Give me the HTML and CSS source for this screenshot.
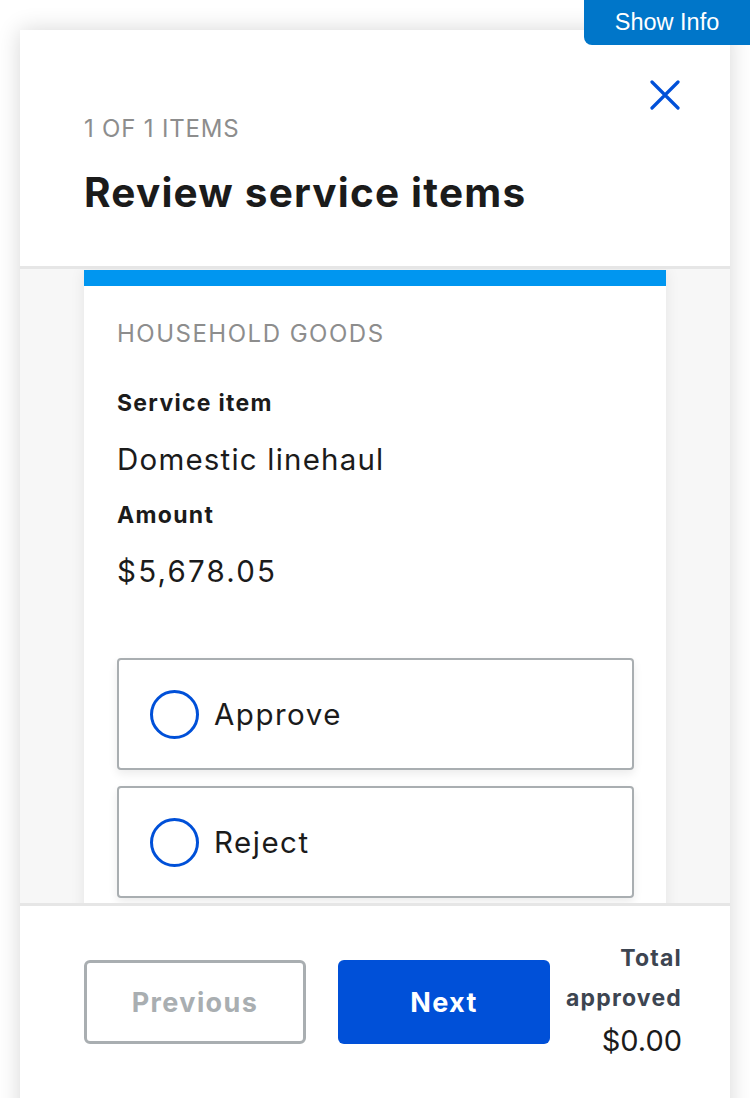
FILE: index.html
```html
<!DOCTYPE html>
<html lang="en">
<head>
<meta charset="utf-8">
<title>Review service items</title>
<link rel="stylesheet" href="styles.css">
</head>
<body>
<button class="show-info">Show Info</button>
<div class="modal">
  <header class="modal-header">
    <div class="header-top">
      <button class="close" aria-label="Close">
        <svg width="30" height="30" viewBox="0 0 30 30"><path d="M2 2 L28 28 M28 2 L2 28" stroke="#0050d8" stroke-width="3.2" stroke-linecap="round" fill="none"/></svg>
      </button>
    </div>
    <div class="count">1 OF 1 ITEMS</div>
    <h1 class="title">Review service items</h1>
  </header>
  <main class="scroll">
    <section class="card">
      <div class="card-body">
        <div class="category">HOUSEHOLD GOODS</div>
        <dl class="details">
          <dt>Service item</dt>
          <dd>Domestic linehaul</dd>
          <dt>Amount</dt>
          <dd class="money">$5,678.05</dd>
        </dl>
        <div class="options">
          <label class="option"><span class="radio"></span><span class="option-label">Approve</span></label>
          <label class="option"><span class="radio"></span><span class="option-label">Reject</span></label>
        </div>
      </div>
    </section>
  </main>
  <footer class="modal-footer">
    <button class="btn btn-outline" disabled>Previous</button>
    <button class="btn btn-primary">Next</button>
    <div class="total">
      <div class="total-label">Total approved</div>
      <div class="total-value">$0.00</div>
    </div>
  </footer>
</div>
</body>
</html>
```

FILE: styles.css
```css
* { box-sizing: border-box; }
html, body { margin: 0; padding: 0; }
body {
  width: 750px;
  height: 1098px;
  overflow: hidden;
  background: #ffffff;
  font-family: Inter, Roboto, sans-serif;
  color: #1b1b1b;
  position: relative;
}
.show-info {
  position: absolute;
  top: 0;
  right: 0;
  width: 166px;
  height: 45px;
  border: none;
  border-radius: 0 0 0 8px;
  background: #0076c9;
  color: #ffffff;
  font-family: "Liberation Sans", Arial, sans-serif;
  font-size: 23.5px;
  padding: 0 0 1px;
  z-index: 2;
}
.modal {
  margin: 30px 20px 0;
  height: 1100px;
  background: #ffffff;
  box-shadow: 0 0 22px rgba(0, 0, 0, 0.16);
  display: flex;
  flex-direction: column;
}
.modal-header {
  height: 239px;
  padding: 50px 50px 0 64px;
  border-bottom: 3px solid #e6e6e6;
  flex: none;
}
.header-top {
  display: flex;
  justify-content: flex-end;
  height: 30px;
}
.close {
  border: none;
  background: none;
  padding: 0;
  width: 30px;
  height: 30px;
  display: block;
}
.count {
  margin-top: 4px;
  font-size: 24px;
  line-height: 30px;
  letter-spacing: 0.8px;
  color: #8d8d8d;
}
.title {
  margin: 25px 0 0;
  font-size: 40.5px;
  line-height: 48px;
  font-weight: 700;
  letter-spacing: 1.2px;
  color: #1b1b1b;
}
.scroll {
  height: 634px;
  flex: none;
  background: #f7f7f7;
  padding: 1px 0 0 64px;
  overflow: hidden;
}
.card {
  width: 582px;
  height: 700px;
  background: #ffffff;
  border-top: 16px solid #0096f0;
  box-shadow: 0 0 14px rgba(0, 0, 0, 0.08);
}
.card-body {
  padding: 30px 32px 0 33px;
}
.category {
  font-size: 24px;
  line-height: 36px;
  letter-spacing: 1.5px;
  color: #8d8d8d;
}
.details {
  margin: 35px 0 0;
}
.details dt {
  font-size: 23px;
  line-height: 32px;
  font-weight: 700;
  letter-spacing: 1.3px;
  color: #1b1b1b;
}
.details dd {
  margin: 20px 0 20px;
  font-size: 29.5px;
  line-height: 40px;
  letter-spacing: 1.2px;
  color: #1b1b1b;
}
.details dd.money {
  letter-spacing: 2.2px;
}
.options {
  margin-top: 67px;
  display: flex;
  flex-direction: column;
  gap: 16px;
}
.option {
  height: 112px;
  border: 2px solid #a9aeb1;
  border-radius: 4px;
  background: #ffffff;
  box-shadow: 0 4px 10px rgba(0, 0, 0, 0.08);
  display: flex;
  align-items: center;
  padding-left: 31px;
  gap: 15px;
}
.radio {
  width: 49px;
  height: 49px;
  border-radius: 50%;
  border: 3.5px solid #0050d8;
  flex: none;
}
.option-label {
  font-size: 29.5px;
  letter-spacing: 1.5px;
  color: #1b1b1b;
}
.modal-footer {
  flex: none;
  border-top: 3px solid #e6e6e6;
  padding: 32px 48px 0 64px;
  display: flex;
  align-items: flex-start;
  gap: 32px;
}
.btn {
  height: 84px;
  margin-top: 22px;
  border-radius: 6px;
  font-family: Inter, Roboto, sans-serif;
  font-size: 27px;
  font-weight: 700;
  letter-spacing: 1.4px;
}
.btn-outline {
  width: 222px;
  border: 3px solid #a9aeb1;
  background: #ffffff;
  color: #a9aeb1;
}
.btn-primary {
  width: 212px;
  border: none;
  background: #0050d8;
  color: #ffffff;
}
.total {
  flex: 1;
  text-align: right;
  margin-left: -30px;
}
.total-label {
  font-size: 23px;
  line-height: 40px;
  font-weight: 700;
  letter-spacing: 1.2px;
  color: #3d4551;
}
.total-value {
  font-size: 29px;
  line-height: 46px;
  color: #1b1b1b;
}
```
